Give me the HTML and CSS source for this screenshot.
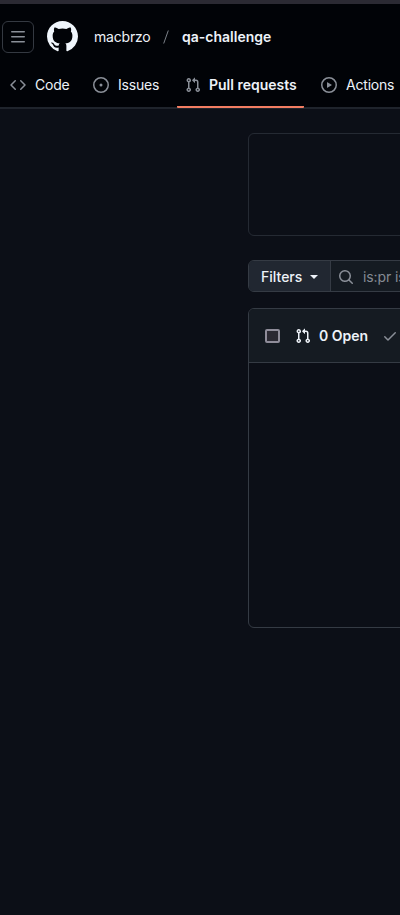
FILE: index.html
```html
<!DOCTYPE html>
<html lang="en">
<head>
<meta charset="utf-8">
<title>Pull requests · macbrzo/qa-challenge</title>
<link rel="stylesheet" href="styles.css">
</head>
<body>
<svg class="defs" aria-hidden="true">
  <symbol id="pull" viewBox="0 0 16 16"><path d="M1.5 3.25a2.25 2.25 0 1 1 3 2.122v5.256a2.251 2.251 0 1 1-1.5 0V5.372A2.25 2.25 0 0 1 1.5 3.25Zm5.677-.177L9.573.677A.25.25 0 0 1 10 .854V2.5h1A2.5 2.5 0 0 1 13.500 5v5.628a2.251 2.251 0 1 1-1.5 0V5a1 1 0 0 0-1-1h-1v1.646a.25.25 0 0 1-.427.177L7.177 3.427a.25.25 0 0 1 0-.354ZM3.750 2.500a.75.75 0 1 0 0 1.500.75.75 0 0 0 0-1.500Zm0 9.500a.75.75 0 1 0 0 1.500.75.75 0 0 0 0-1.500Zm8.250.750a.75.75 0 1 0 1.500 0 .75.75 0 0 0-1.500 0Z"/></symbol>
</svg>
<header class="header">
  <div class="topbar">
    <button class="menu" aria-label="Menu"><svg viewBox="0 0 16 16" width="16" height="16"><path d="M1 2.75A.75.75 0 0 1 1.750 2h12.500a.75.75 0 0 1 0 1.500H1.750A.75.75 0 0 1 1 2.750Zm0 5A.75.75 0 0 1 1.750 7h12.500a.75.75 0 0 1 0 1.500H1.750A.75.75 0 0 1 1 7.750ZM1.750 12h12.500a.75.75 0 0 1 0 1.500H1.750a.75.75 0 0 1 0-1.500Z"/></svg></button>
    <svg class="logo" viewBox="0 0 16 16"><path d="M8 0c4.420 0 8 3.580 8 8a8.013 8.013 0 0 1-5.450 7.590c-.4.080-.550-.170-.550-.380 0-.270.010-1.130.010-2.200 0-.750-.250-1.230-.540-1.480 1.780-.2 3.650-.880 3.650-3.950 0-.880-.310-1.590-.820-2.150.080-.2.360-1.020-.080-2.120 0 0-.670-.220-2.200.820-.640-.180-1.320-.270-2-.270-.680 0-1.360.090-2 .270-1.530-1.030-2.200-.820-2.200-.820-.440 1.100-.160 1.920-.080 2.120-.510.560-.820 1.280-.820 2.150 0 3.060 1.860 3.750 3.640 3.950-.230.200-.440.550-.510 1.070-.460.210-1.610.550-2.330-.660-.150-.240-.6-.830-1.230-.820-.670.010-.270.380.010.530.340.190.730.9.820 1.130.160.450.680 1.310 2.690.940 0 .670.010 1.300.010 1.490 0 .210-.150.450-.550.380A7.995 7.995 0 0 1 0 8c0-4.420 3.580-8 8-8Z"/></svg>
    <div class="crumbs"><span class="owner">macbrzo</span><svg class="slash" viewBox="0 0 6 14"><path d="M5.300.500.700 13.500"/></svg><span class="repo">qa-challenge</span></div>
  </div>
  <nav class="tabs">
    <a class="tab code"><svg viewBox="0 0 16 16"><path d="m11.280 3.220 4.250 4.250a.75.75 0 0 1 0 1.060l-4.250 4.250a.749.749 0 0 1-1.060-1.060L13.940 8l-3.720-3.720a.749.749 0 0 1 1.060-1.060Zm-6.560 0a.751.751 0 0 1 1.060 1.060L2.060 8l3.720 3.720a.749.749 0 1 1-1.060 1.060L.470 8.530a.75.75 0 0 1 0-1.060Z"/></svg><span>Code</span></a>
    <a class="tab issues"><svg viewBox="0 0 16 16"><path d="M8 9.500a1.500 1.500 0 1 0 0-3 1.500 1.500 0 0 0 0 3Z"/><path d="M8 0a8 8 0 1 1 0 16A8 8 0 0 1 8 0ZM1.500 8a6.500 6.500 0 1 0 13 0 6.500 6.500 0 0 0-13 0Z"/></svg><span>Issues</span></a>
    <a class="tab pulls"><svg><use href="#pull"/></svg><span>Pull requests</span></a>
    <a class="tab actions"><svg viewBox="0 0 16 16"><path d="M8 0a8 8 0 1 1 0 16A8 8 0 0 1 8 0ZM1.500 8a6.500 6.500 0 1 0 13 0 6.500 6.500 0 0 0-13 0Zm4.879-2.773 4.264 2.559a.25.25 0 0 1 0 .428l-4.264 2.559A.25.25 0 0 1 6 10.559V5.442a.25.25 0 0 1 .379-.215Z"/></svg><span>Actions</span></a>
  </nav>
</header>
<main class="content">
  <section class="banner"></section>
  <div class="search">
    <button class="filters"><span>Filters</span><i class="caret"></i></button>
    <div class="query"><svg viewBox="0 0 16 16"><path d="M10.680 11.740a6 6 0 0 1-7.922-8.982 6 6 0 0 1 8.982 7.922l3.040 3.040a.749.749 0 1 1-1.060 1.060ZM11.500 7a4.499 4.499 0 1 0-8.997 0A4.499 4.499 0 0 0 11.500 7Z"/></svg><span>is:pr is</span></div>
  </div>
  <section class="list">
    <div class="listhead">
      <i class="check"></i>
      <svg class="pr"><use href="#pull"/></svg>
      <span class="open">0 Open</span>
      <svg class="tick" viewBox="0 0 16 16"><path d="M13.780 4.220a.75.75 0 0 1 0 1.060l-7.250 7.250a.75.75 0 0 1-1.060 0L2.220 9.280a.751.751 0 0 1 1.060-1.060L6 10.940l6.720-6.720a.75.75 0 0 1 1.060 0Z"/></svg>
    </div>
  </section>
</main>
</body>
</html>
```
FILE: styles.css
```css
* { box-sizing: border-box; }
body {
  margin: 0;
  height: 915px;
  overflow: hidden;
  background: #0c0f17;
  color: #edf2f8;
  font: 14px/20px Inter, "Liberation Sans", sans-serif;
}
svg { display: block; flex: none; width: 16px; height: 16px; fill: #8a8f98; }
span { white-space: nowrap; }
button { font: inherit; color: inherit; padding: 0; }
.defs { display: none; }
.header {
  height: 109px;
  border-top: 4px solid #2b2a33;
  border-bottom: 2px solid #1f242c;
  background: #010307;
}
.topbar { display: flex; align-items: center; height: 65px; padding-left: 2px; }
.menu {
  display: flex;
  align-items: center;
  justify-content: center;
  width: 32px;
  height: 32px;
  background: none;
  border: 1px solid #343941;
  border-radius: 6px;
}
.logo { width: 31px; height: 31px; margin-left: 13px; fill: #f0f6fc; }
.crumbs { display: flex; align-items: center; margin-left: 16px; }
.owner { width: 56px; letter-spacing: -0.2px; }
.slash { width: 6px; height: 14px; margin: 0 13px; fill: none; stroke: #7b8088; }
.repo { font-weight: 600; }
.tabs { display: flex; height: 39px; padding-left: 2px; }
.tab { display: flex; flex: none; height: 39px; padding: 0 8px 5px; align-items: center; gap: 8px; border-bottom: 2px solid transparent; letter-spacing: -0.2px; }
.code { width: 83px; gap: 9px; }
.issues { width: 92px; gap: 9px; }
.pulls { width: 127px; margin-right: 9px; border-color: #f27d62; border-radius: 1px; font-weight: 600; letter-spacing: 0; }
.actions { gap: 9px; }
.content { padding: 24px 0 0 248px; }
.content > * { margin-right: -8px; }
.banner { height: 103px; border: 1px solid #252a33; border-radius: 6px; }
.search { display: flex; height: 32px; margin-top: 24px; border: 1px solid #353b44; border-radius: 6px; background: #151b22; overflow: hidden; }
.filters { display: flex; align-items: center; width: 82px; flex: none; padding: 1px 0 0 12px; border: 0; border-right: 1px solid #353b44; background: #212731; font-weight: 500; }
.caret { margin-left: 8px; border: 4px solid transparent; border-top-color: #edf2f8; border-bottom: 0; }
.query { display: flex; align-items: center; gap: 9px; padding: 1px 0 0 7px; color: #858b94; letter-spacing: -0.1px; }
.list { height: 320px; margin-top: 16px; border: 1px solid #353b44; border-radius: 6px; overflow: hidden; }
.listhead { display: flex; align-items: center; height: 54px; padding-left: 16px; border-bottom: 1px solid #353b44; background: #151b22; }
.check { width: 15px; height: 14px; border: 2px solid #8f8d9a; border-radius: 2px; background: #2b2a33; }
.pr { margin-left: 15px; fill: #edf2f8; }
.open { margin-left: 8px; width: 49px; font-weight: 600; }
.tick { margin-left: 14px; }
```
